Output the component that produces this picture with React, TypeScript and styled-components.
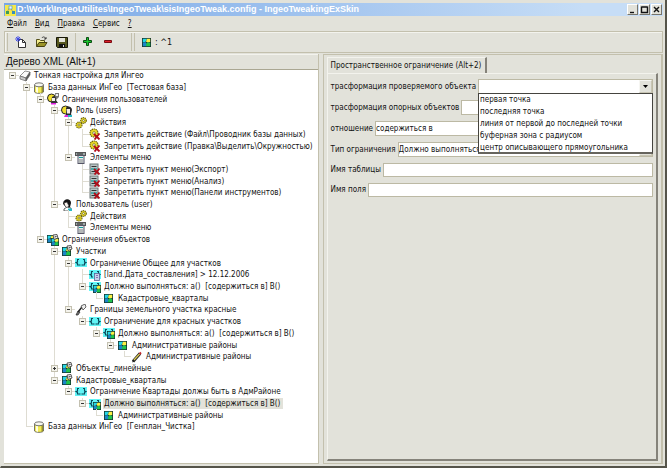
import React from "react";
import styled, { createGlobalStyle } from "styled-components";

const face = "#e2e2da";
const edge = "#c3c0ad";
const dark = "#85837a";

const GlobalStyle = createGlobalStyle`
  * { box-sizing: border-box; }
  body {
    margin: 0;
    background: ${face};
    color: #111;
    font-family: "DejaVu Sans Condensed", "DejaVu Sans", sans-serif;
    font-size: 8px;
    line-height: 12px;
  }
  button, input, select { font: inherit; color: inherit; }
`;

const Window = styled.div`
  display: flex;
  flex-direction: column;
  height: 100vh;
  padding: 3px 2px 2px 3px;
  background: ${face};
  border: 1px solid;
  border-color: ${face} #55544a #55544a ${face};
  border-width: 0 2px 2px 1px;
  overflow: hidden;
`;

const TitleBar = styled.header`
  display: flex;
  align-items: center;
  gap: 1px;
  height: 13px;
  flex: none;
  background: linear-gradient(90deg, #78a7e6, #c6ddf6 88%);
  color: #fff;
`;

const Title = styled.h1`
  flex: 1;
  margin: 0;
  font-family: "Liberation Sans", sans-serif;
  font-size: 9px;
  line-height: 13px;
  font-weight: 700;
  white-space: nowrap;
`;

const CaptionButtons = styled.div`
  display: flex;
  gap: 1px;
  padding-right: 1px;
`;

const CaptionButton = styled.button`
  display: flex;
  width: 11px;
  height: 11px;
  padding: 0;
  background: ${face};
  border: 1px solid;
  border-color: #fff #77756c #77756c #fff;
`;

const MenuBar = styled.nav`
  display: flex;
  align-items: center;
  gap: 8px;
  height: 15px;
  flex: none;
  padding-left: 3px;
`;

const MenuItem = styled.button`
  padding: 0;
  border: 0;
  background: none;
  line-height: 12px;
`;

const Toolbars = styled.div`
  display: flex;
  align-items: stretch;
  height: 22px;
  flex: none;
  border: 1px solid ${edge};
  box-shadow: inset 1px 1px #f3f3ed;
`;

const ToolGroup = styled.div<{ $end?: boolean }>`
  display: flex;
  align-items: center;
  gap: 8px;
  padding: 0 5px 0 7px;
  margin: 1px 0 1px 2px;
  border-left: 1px solid ${edge};
  ${(p) => p.$end && `padding-right: 16px; border-right: 1px solid ${edge};`}
`;

const ToolButton = styled.button`
  display: flex;
  align-items: center;
  gap: 4px;
  padding: 0;
  border: 0;
  background: none;
  font-size: 9px;
`;

const Body = styled.main`
  display: grid;
  grid-template-columns: minmax(0, 315fr) minmax(0, 341fr);
  gap: 4px;
  flex: 1;
  min-height: 0;
  padding-top: 1px;
`;

const TreePanel = styled.section`
  display: flex;
  flex-direction: column;
  min-height: 0;
  border-right: 1px solid ${edge};
  border-bottom: 1px solid ${edge};
`;

const TreeHeading = styled.h2`
  flex: none;
  margin: 0;
  padding-left: 2px;
  border-top: 1px solid #f3f3ed;
  border-bottom: 1px solid #aaa792;
  font-family: "Liberation Sans", sans-serif;
  font-size: 10px;
  font-weight: 400;
  line-height: 14px;
`;

const Tree = styled.div`
  display: flex;
  flex-direction: column;
  flex: 1;
  min-height: 0;
  padding: 0 0 30px 1px;
  background: #fff;
`;

const TreeRow = styled.div`
  display: flex;
  flex: 1;
  min-height: 11px;
  align-items: center;
  white-space: nowrap;
`;

const Guide = styled.span<{ $v: "none" | "full" | "half"; $arm?: boolean }>`
  display: grid;
  place-items: center;
  align-self: stretch;
  width: 14px;
  flex: none;
  background-image: linear-gradient(#dedcd2, #dedcd2), linear-gradient(#dedcd2, #dedcd2);
  background-repeat: no-repeat;
  background-size: 1px ${(p) => (p.$v === "full" ? "100%" : p.$v === "half" ? "50%" : "0")},
    ${(p) => (p.$arm ? "7px 1px" : "0 0")};
  background-position: 7px 0, 7px 50%;
`;

const Expander = styled.button`
  display: flex;
  width: 7px;
  height: 7px;
  padding: 0;
  border: 1px solid #c3c0b0;
  background: #f4f3ec;
`;

const NodeLabel = styled.span<{ $selected?: boolean }>`
  margin-left: 2px;
  padding: 0 3px 0 1px;
  line-height: 11px;
  background: ${(p) => (p.$selected ? face : "transparent")};
`;

const SettingsPanel = styled.section`
  display: flex;
  flex-direction: column;
  min-height: 0;
  padding: 2px 3px 2px 3px;
  border: 1px solid ${edge};
  border-right-width: 2px;
`;

const Tab = styled.button`
  align-self: flex-start;
  flex: none;
  height: 16px;
  padding: 0 4px 0 3px;
  background: ${face};
  border: 1px solid;
  border-color: #f3f3ed ${dark} transparent #f3f3ed;
  border-right-width: 2px;
  border-bottom: 0;
`;

const TabPage = styled.form`
  display: flex;
  flex-direction: column;
  gap: 6px;
  flex: 1;
  padding: 5px 3px 0 3px;
  border: 1px solid;
  border-color: #f3f3ed ${dark} ${dark} #f3f3ed;
  border-right-width: 2px;
  border-bottom-width: 2px;
`;

const Field = styled.div<{ $slim?: boolean }>`
  display: flex;
  align-items: center;
  gap: 2px;
  flex: none;
  height: ${(p) => (p.$slim ? 14 : 15)}px;
`;

const Label = styled.label`
  flex: none;
  white-space: nowrap;
`;

const Control = styled.div`
  position: relative;
  display: flex;
  flex: 1;
  min-width: 0;
  height: 100%;
  background: #fff;
  border: 1px solid #bcb9a4;
`;

const Select = styled.select`
  appearance: none;
  flex: 1;
  min-width: 0;
  padding: 0;
  border: 0;
  border-radius: 0;
  background: #fff;
  outline: 0;
`;

const Arrow = styled.span`
  display: grid;
  place-items: center;
  width: 13px;
  background: ${face};
  border: 1px solid;
  border-color: #f6f6f2 #c8c5b4 #c8c5b4 #f6f6f2;
`;

const TextInput = styled.input`
  flex: 1;
  min-width: 0;
  padding: 0 1px;
  border: 1px solid #bcb9a4;
  height: 100%;
  background: #fff;
  outline: 0;
`;

const DropList = styled.ul`
  position: absolute;
  z-index: 2;
  top: 100%;
  left: -1px;
  right: -1px;
  display: grid;
  grid-auto-rows: 1fr;
  height: 61px;
  margin: 0;
  padding: 0 0 1px 1px;
  list-style: none;
  background: #fff;
  border: 1px solid #45443f;
  border-bottom: 2px solid #66645d;
`;

const Svg = styled.svg`
  flex: none;
  display: block;
`;

type IconName =
  | "root" | "db" | "users" | "role" | "gears" | "noAction" | "menu" | "noMenu" | "user"
  | "layers" | "layer" | "paren" | "land" | "must" | "map" | "brush" | "pencil";

const Cross = () => (
  <path d="M5 6l5.5 5.5M10.5 5.5L5.5 11.5" stroke="#b00c18" strokeWidth="1.8" />
);

const MapTile = ({ x = 0, y = 0, s = 8 }: { x?: number; y?: number; s?: number }) => (
  <svg x={x} y={y} width={s} height={s} viewBox="0 0 8 8">
    <rect width="8" height="8" fill="#15382f" />
    <path d="M.7.700h3.800L3 3.500.7 4z" fill="#25d5e6" />
    <path d="M4.500.700h2.800v2.800L5 4 3.500 3z" fill="#fbef45" />
    <path d="M.7 4.500l2.300-1 1.500 2-1 1.800H.7z" fill="#1b86c8" />
    <path d="M4 4.500l1.500-.7 1.800.7v2.800H3.500z" fill="#1fc44c" />
  </svg>
);

const Flag = () => (
  <g>
    <path d="M6 1l4-.5 1 3.500-4 1.500z" fill="#f4f4f4" stroke="#444" strokeWidth=".9" />
    <path d="M7.500 3l2-.5" stroke="#333" />
  </g>
);

const Braces = () => (
  <g>
    <rect y="1" width="12" height="9" fill="#62f4f6" />
    <path d="M4 2.500H2.500V5L1 5.500l1.500 1V8H4M8 2.500h1.500V5l1.500.5-1.500 1V8H8" fill="none" stroke="#0b4b5c" strokeWidth="1.100" />
  </g>
);

const Gear = ({ x, y, r }: { x: number; y: number; r: number }) => (
  <g>
    <circle cx={x} cy={y} r={r} fill="#e8d929" stroke="#6c6410" strokeWidth="1.2" strokeDasharray="1.300 .7" />
    <circle cx={x} cy={y} r={r / 3} fill="#fff" stroke="#5c550e" strokeWidth=".6" />
  </g>
);

const MenuSheet = () => (
  <g>
    <rect x="1" y="1" width="8" height="10" fill="#b9c4c4" stroke="#6d7777" />
    <path d="M2.500 3.500h5M2.500 8.500h5" stroke="#333" />
    <path d="M2 6h6" stroke="#2aa3a3" strokeWidth="1.500" />
  </g>
);

const drawings: Record<IconName, React.ReactNode> = {
  root: (
    <g stroke="#666" strokeWidth=".7">
      <path d="M1 6l5-5 5 1-4 6z" fill="#fafafa" />
      <path d="M1 6l6 2v3L1 9z" fill="#c9c9c9" />
      <path d="M7 8l4-6v3l-4 6z" fill="#555" />
    </g>
  ),
  db: (
    <g>
      <path d="M1.500 3v7c1 1.800 8 1.800 9 0V3z" fill="#f3ec55" stroke="#555" strokeWidth=".8" />
      <path d="M3 4v6l2 1V4z" fill="#fffde0" />
      <path d="M8.500 4v7l1.500-1V3z" fill="#97922d" />
      <ellipse cx="6" cy="2.800" rx="4.500" ry="2" fill="#f7f7ef" stroke="#555" strokeWidth=".8" />
    </g>
  ),
  users: (
    <g>
      <circle cx="4.500" cy="5" r="4" fill="#f0dd2c" stroke="#252525" />
      <path d="M5 4c2-2 5-1 4 3l2 3H4z" fill="#333" />
      <path d="M5 5h3v3H5z" fill="#eee" />
      <path d="M4 10h5v1.500H4z" fill="#e11fe0" />
      <path d="M8 0h4v4l-3 3z" fill="#777" />
      <path d="M9 1h2v2H9z" fill="#eee" />
    </g>
  ),
  role: (
    <g>
      <circle cx="4.500" cy="5" r="4" fill="#f0dd2c" stroke="#252525" />
      <path d="M5 3c2-3 6-1 6 2l-1 4 1 2H5z" fill="#29292b" />
      <path d="M5.500 4h3.500v4.500H6z" fill="#f5ece6" />
      <path d="M4 10h3v2H3z" fill="#dc29dc" />
      <path d="M7 10h4v2H7z" fill="#28b8c8" />
    </g>
  ),
  gears: (
    <g>
      <Gear x={4} y={8} r={3} />
      <Gear x={8.500} y={3.500} r={2.800} />
    </g>
  ),
  noAction: (
    <g>
      <Gear x={5} y={5} r={4} />
      <Cross />
    </g>
  ),
  menu: (
    <g>
      <rect x=".5" y=".5" width="10" height="3" fill="#9ea8a8" stroke="#555" />
      <rect x="3" y="3.500" width="6" height="8" fill="#e8eeee" stroke="#556" />
      <path d="M4 5.500h4" stroke="#159b9b" />
      <path d="M4 8h4M4 10h4" stroke="#555" strokeWidth=".7" />
      <path d="M2 2h6" stroke="#222" />
    </g>
  ),
  noMenu: (
    <g>
      <MenuSheet />
      <Cross />
    </g>
  ),
  user: (
    <g>
      <path d="M2 5c0-6 8-6 8-1l-1 4-3 1-2-2z" fill="#141414" />
      <path d="M3 4l3-1 2 4-2 2-2-2z" fill="#f8f2ee" stroke="#222" strokeWidth=".6" />
      <path d="M3 10l3-2 4 1v3H3z" fill="#fff" stroke="#222" strokeWidth=".7" />
      <path d="M7 9.500h4V12H7z" fill="#25bcca" />
    </g>
  ),
  layers: (
    <g>
      <MapTile x={0} y={1} />
      <MapTile x={4} y={4} />
      <Flag />
    </g>
  ),
  layer: (
    <g>
      <MapTile x={1} y={2} s={9} />
      <Flag />
    </g>
  ),
  paren: (
    <g>
      <Braces />
      <path d="M4 8h1M5.500 8h1M7 8h1" stroke="#063a4a" />
    </g>
  ),
  land: (
    <g>
      <Braces />
      <rect x="5.500" y="4.500" width="5" height="7" fill="#c9d3ea" stroke="#5b6398" strokeWidth=".8" />
      <path d="M7 6.500h2M7 8.500h2" stroke="#7a58a8" strokeWidth=".8" />
    </g>
  ),
  must: (
    <g>
      <Braces />
      <MapTile x={4} y={4} s={8} />
    </g>
  ),
  map: <MapTile x={1} y={2} s={9} />,
  brush: (
    <g>
      <path d="M1 11l2-4 2 1-2 3z" fill="#777" stroke="#222" strokeWidth=".7" />
      <path d="M3 8l4-5" stroke="#222" strokeWidth="1.500" />
      <path d="M6 2l4-2 1 3-3 3z" fill="#eee" stroke="#444" strokeWidth=".8" />
    </g>
  ),
  pencil: (
    <g>
      <path d="M2 10.500L9 2.500" stroke="#222" strokeWidth="3" />
      <path d="M3 9L9 2.500" stroke="#dcca55" strokeWidth="1.300" />
      <path d="M8.500 3L10 1.500" stroke="#c4262c" strokeWidth="2" />
      <path d="M1 11.500l1-2 1 1z" fill="#111" />
    </g>
  ),
};

const Icon = ({ name }: { name: IconName }) => (
  <Svg width="12" height="12" viewBox="0 0 12 12" aria-hidden="true">
    {drawings[name]}
  </Svg>
);

interface Node {
  icon: IconName;
  text: string;
  children?: Node[];
  collapsed?: boolean;
  selected?: boolean;
}

const must = "Должно выполняться: a()  [содержиться в] B()";

const roots: Node[] = [
  {
    icon: "root", text: "Тонкая настройка для Ингео", children: [
      {
        icon: "db", text: "База данных ИнГео  [Тестовая база]", children: [
          {
            icon: "users", text: "Оганичения пользователей", children: [
              {
                icon: "role", text: "Роль (users)", children: [
                  {
                    icon: "gears", text: "Действия", children: [
                      { icon: "noAction", text: "Запретить действие (Файл\\Проводник базы данных)" },
                      { icon: "noAction", text: "Запретить действие (Правка\\Выделить\\Окружностью)" },
                    ],
                  },
                  {
                    icon: "menu", text: "Элементы меню", children: [
                      { icon: "noMenu", text: "Запретить пункт меню(Экспорт)" },
                      { icon: "noMenu", text: "Запретить пункт меню(Анализ)" },
                      { icon: "noMenu", text: "Запретить пункт меню(Панели инструментов)" },
                    ],
                  },
                ],
              },
              {
                icon: "user", text: "Пользователь (user)", children: [
                  { icon: "gears", text: "Действия" },
                  { icon: "menu", text: "Элементы меню" },
                ],
              },
            ],
          },
          {
            icon: "layers", text: "Ограничения объектов", children: [
              {
                icon: "layer", text: "Участки", children: [
                  {
                    icon: "paren", text: "Ограничение Общее для участков", children: [
                      { icon: "land", text: "[land.Дата_составления] > 12.12.2006" },
                      { icon: "must", text: must, children: [{ icon: "map", text: "Кадастровые_кварталы" }] },
                    ],
                  },
                  {
                    icon: "brush", text: "Границы земельного участка красные", children: [
                      {
                        icon: "paren", text: "Ограничение для красных участков", children: [
                          {
                            icon: "must", text: must, children: [
                              {
                                icon: "map", text: "Административные районы",
                                children: [{ icon: "pencil", text: "Административные районы" }],
                              },
                            ],
                          },
                        ],
                      },
                    ],
                  },
                ],
              },
              { icon: "layer", text: "Объекты_линейные", collapsed: true },
              {
                icon: "layer", text: "Кадастровые_кварталы", children: [
                  {
                    icon: "paren", text: "Ограничение Квартады должы быть в АдмРайоне", children: [
                      {
                        icon: "must", text: must, selected: true,
                        children: [{ icon: "map", text: "Административные районы" }],
                      },
                    ],
                  },
                ],
              },
            ],
          },
        ],
      },
      { icon: "db", text: "База данных ИнГео  [Генплан_Чистка]" },
    ],
  },
];

const renderNodes = (nodes: Node[], trail: boolean[] = []): React.ReactNode[] =>
  nodes.flatMap((node, i) => {
    const last = i === nodes.length - 1;
    const branch = node.children || node.collapsed;
    const row = (
      <TreeRow
        key={[...trail, i, node.text].join()}
        role="treeitem"
        aria-level={trail.length + 1}
        aria-selected={!!node.selected}
      >
        {trail.map((line, k) => (
          <Guide key={k} $v={line ? "full" : "none"} />
        ))}
        <Guide $v={trail.length === 0 ? "none" : last ? "half" : "full"} $arm>
          {branch && (
            <Expander type="button" aria-label={node.collapsed ? "Развернуть" : "Свернуть"}>
              <Svg width="5" height="5" viewBox="0 0 5 5">
                <path d={node.collapsed ? "M1 2.500h3M2.500 1v3" : "M1 2.500h3"} stroke="#333" />
              </Svg>
            </Expander>
          )}
        </Guide>
        <Icon name={node.icon} />
        <NodeLabel $selected={node.selected}>{node.text.replace("  ", "\u00a0\u00a0")}</NodeLabel>
      </TreeRow>
    );
    return [row, ...renderNodes(node.children ?? [], [...trail, !last])];
  });

const menus = ["Файл", "Вид", "Правка", "Сервис", "?"];
const options = [
  "первая точка",
  "последняя точка",
  "линия от первой до последней точки",
  "буферная зона с радиусом",
  "центр описывающего прямоугольника",
];

interface ComboProps {
  id: string;
  label: string;
  value?: string;
  open?: boolean;
}

const Combo = ({ id, label, value = "", open }: ComboProps) => (
  <Field>
    <Label htmlFor={id}>{label}</Label>
    <Control>
      <Select id={id} defaultValue={value}>
        <option value={value}>{value}</option>
      </Select>
      <Arrow>
        <Svg width="5" height="3" viewBox="0 0 5 3">
          <path d="M0 0h5L2.500 3z" fill="#000" />
        </Svg>
      </Arrow>
      {open && (
        <DropList role="listbox" aria-label={label}>
          {options.map((o) => (
            <li key={o} role="option" aria-selected="false">{o}</li>
          ))}
        </DropList>
      )}
    </Control>
  </Field>
);

const TextField = ({ id, label }: { id: string; label: string }) => (
  <Field $slim>
    <Label htmlFor={id}>{label}</Label>
    <TextInput id={id} type="text" />
  </Field>
);

export default function App() {
  return (
    <Window>
      <GlobalStyle />
      <TitleBar>
        <Svg width="12" height="12" viewBox="0 0 12 12" aria-hidden="true">
          <rect x="1" y="1" width="11" height="11" fill="#f4e84a" />
          <path d="M6 3l3 5M6 3L3 8" stroke="#888" strokeWidth=".7" />
          <rect x="5" y="2" width="3" height="3" fill="#e9f6ff" stroke="#3a8fc8" strokeWidth=".6" />
          <rect x="2" y="7" width="3" height="3" fill="#3f9b58" />
          <rect x="8" y="7" width="3" height="3" fill="#368fbc" />
        </Svg>
        <Title>D:\Work\IngeoUtilites\IngeoTweak\sisIngeoTweak.config - IngeoTweakingExSkin</Title>
        <CaptionButtons>
          {[
            { name: "Свернуть", d: "M2 7.500h4" },
            { name: "Развернуть", d: "M1.500 2h6M1.500 1.500v6h6v-6" },
            { name: "Закрыть", d: "M2 2l5 5M7 2l-5 5" },
          ].map((b) => (
            <CaptionButton key={b.name} type="button" aria-label={b.name}>
              <Svg width="9" height="9" viewBox="0 0 9 9">
                <path d={b.d} fill="none" stroke="#111" strokeWidth="1.400" />
              </Svg>
            </CaptionButton>
          ))}
        </CaptionButtons>
      </TitleBar>
      <MenuBar>
        {menus.map((m) => (
          <MenuItem key={m} type="button">
            <u>{m[0]}</u>{m.slice(1)}
          </MenuItem>
        ))}
      </MenuBar>
      <Toolbars>
        <ToolGroup>
          <ToolButton type="button" aria-label="Создать">
            <Svg width="12" height="13" viewBox="0 0 12 13">
              <path d="M3.500 3.500h4l3 3v5h-7z" fill="#fff" stroke="#333" />
              <path d="M7.500 3.500v3h3" fill="none" stroke="#333" />
              <path d="M3 0v6M0 3h6M1 1l4 4M5 1L1 5" stroke="#3b46e8" strokeWidth=".9" />
            </Svg>
          </ToolButton>
          <ToolButton type="button" aria-label="Открыть">
            <Svg width="13" height="12" viewBox="0 0 13 12">
              <path d="M1.500 10.500v-7h3l1 1h4v2" fill="#f5ee8d" stroke="#55501a" />
              <path d="M1.500 10.500l2.500-4h8l-2.500 4z" fill="#9b9427" stroke="#45410f" />
              <path d="M7 2c1-2 3-1 4 1M11 1v2H9" fill="none" stroke="#222" strokeWidth=".8" />
            </Svg>
          </ToolButton>
          <ToolButton type="button" aria-label="Сохранить">
            <Svg width="12" height="12" viewBox="0 0 12 12">
              <path d="M.5 1.500h11v10H1.500l-1-1z" fill="#56571f" stroke="#171708" />
              <rect x="3" y="2" width="6" height="4" fill="#e4e4da" />
              <rect x="3" y="8" width="6" height="3" fill="#111" />
              <rect x="7" y="9" width="1" height="2" fill="#ddd" />
            </Svg>
          </ToolButton>
        </ToolGroup>
        <ToolGroup $end>
          <ToolButton type="button" aria-label="Добавить">
            <Svg width="12" height="12" viewBox="0 0 12 12">
              <path d="M3.500 1.500h2v3h3v2h-3v3h-2v-3h-3v-2h3z" fill="#18c52c" stroke="#0b4c12" />
            </Svg>
          </ToolButton>
          <ToolButton type="button" aria-label="Удалить">
            <Svg width="12" height="12" viewBox="0 0 12 12">
              <path d="M1.500 4.500h7v2h-7z" fill="#e02029" stroke="#7a0c12" />
            </Svg>
          </ToolButton>
        </ToolGroup>
        <ToolGroup>
          <ToolButton type="button">
            <Svg width="9" height="9" viewBox="0 0 9 9"><MapTile s={9} /></Svg>
            : ^1
          </ToolButton>
        </ToolGroup>
      </Toolbars>
      <Body>
        <TreePanel>
          <TreeHeading>Дерево XML (Alt+1)</TreeHeading>
          <Tree role="tree" aria-label="Дерево XML">{renderNodes(roots)}</Tree>
        </TreePanel>
        <SettingsPanel>
          <Tab type="button">Пространственное ограничение (Alt+2)</Tab>
          <TabPage>
            <Combo id="checked" label="трасформация проверяемого объекта" open />
            <Combo id="support" label="трасформация опорных объектов" />
            <Combo id="relation" label="отношение" value="содержиться в" />
            <Combo id="kind" label="Тип ограничения" value="Должно выполняться" />
            <TextField id="table" label="Имя таблицы" />
            <TextField id="column" label="Имя поля" />
          </TabPage>
        </SettingsPanel>
      </Body>
    </Window>
  );
}
